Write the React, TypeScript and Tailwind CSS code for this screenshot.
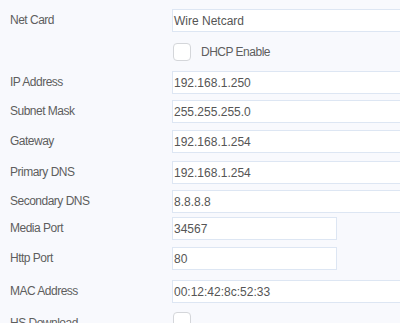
import React from 'react';

type Row =
    | { kind: 'input'; label: string; value: string; short?: boolean; h: string }
    | { kind: 'check'; label: string; text?: string; h: string };

const rows: Row[] = [
    { kind: 'input', label: 'Net Card', value: 'Wire Netcard', h: 'h-[34px]' },
    { kind: 'check', label: '', text: 'DHCP Enable', h: 'h-[28px]' },
    { kind: 'input', label: 'IP Address', value: '192.168.1.250', h: 'h-[29px]' },
    { kind: 'input', label: 'Subnet Mask', value: '255.255.255.0', h: 'h-[30px]' },
    { kind: 'input', label: 'Gateway', value: '192.168.1.254', h: 'h-[31px]' },
    { kind: 'input', label: 'Primary DNS', value: '192.168.1.254', h: 'h-[29px]' },
    { kind: 'input', label: 'Secondary DNS', value: '8.8.8.8', h: 'h-[27px]' },
    { kind: 'input', label: 'Media Port', value: '34567', short: true, h: 'h-[30px]' },
    { kind: 'input', label: 'Http Port', value: '80', short: true, h: 'h-[33px]' },
    { kind: 'input', label: 'MAC Address', value: '00:12:42:8c:52:33', h: 'h-[32px]' },
    { kind: 'check', label: 'HS Download', h: 'h-[30px]' },
];

const Checkbox: React.FC = () => (
    <span className="block w-[18px] h-[18px] rounded-[4px] border border-[#d4d6da] bg-white shrink-0" />
);

const App: React.FC = () => {
    return (
        <div className="w-[400px] h-[323px] overflow-hidden bg-[#f8f9fd] pt-[9px] font-['Liberation_Sans',Arial,sans-serif]">
            {rows.map((row, i) => (
                <div key={i} className={`flex items-start ${row.h}`}>
                    {/* label column */}
                    <div className="w-[172px] shrink-0 pl-[10px] h-[21px] flex items-center text-[12px] tracking-[-0.5px] text-[#5e5e5e]">
                        {row.label}
                    </div>
                    {row.kind === 'input' ? (
                        <div
                            className={`h-[23px] ${row.short ? 'w-[165px]' : 'w-[260px]'} shrink-0 bg-white border border-[#dde6f3] flex items-center pl-[1px] text-[12px] text-[#555]`}
                        >
                            {row.value}
                        </div>
                    ) : (
                        <div className="flex items-center gap-[10px] h-[18px] ml-px">
                            <Checkbox />
                            {row.text && (
                                <span className="text-[12px] tracking-[-0.5px] text-[#5e5e5e]">{row.text}</span>
                            )}
                        </div>
                    )}
                </div>
            ))}
        </div>
    );
};

export default App;
